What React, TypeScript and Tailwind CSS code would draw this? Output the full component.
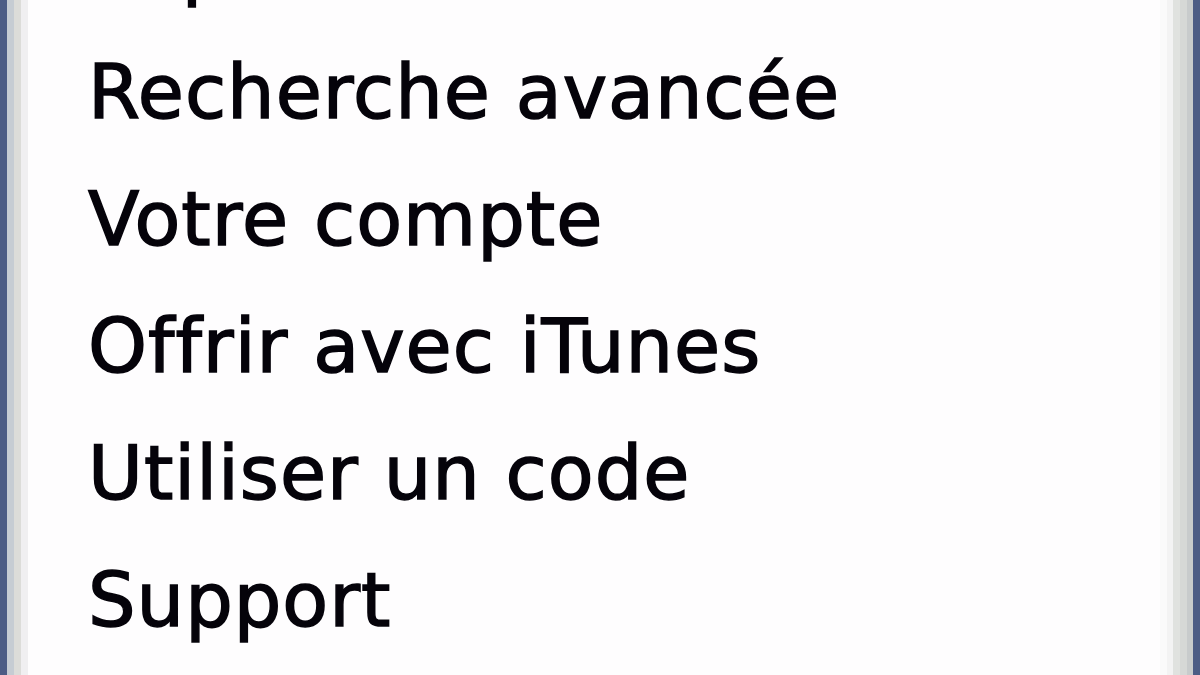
const links = [
  'Explorer',
  'Recherche avancée',
  'Votre compte',
  'Offrir avec iTunes',
  'Utiliser un code',
  'Support',
];

export default function App() {
  return (
    <div className="flex h-[675px] w-[1200px] overflow-hidden bg-white">
      {/* left window frame */}
      <div className="w-[7px] bg-[#4c5c85]" />
      <div className="w-[7px] bg-[#c6ccd3]" />
      <div className="w-[7px] bg-[#dcdcd9]" />
      <div className="w-[7px] bg-[#f0eff1]" />

      <div className="flex-1 overflow-hidden bg-[#fefdfe]">
        <ul
          className="-mt-[98px] pl-[60px] text-[75px] leading-[127px] tracking-[1px] text-[#05030a] [-webkit-text-stroke:1.5px_#05030a]"
          style={{ fontFamily: '"DejaVu Sans", Verdana, sans-serif' }}
        >
          {links.map((label) => (
            <li key={label} className="whitespace-nowrap">
              {label}
            </li>
          ))}
        </ul>
      </div>

      {/* right window frame */}
      <div className="w-[7px] bg-[#fafafa]" />
      <div className="w-[6px] bg-[#f3f3f3]" />
      <div className="w-[7px] bg-[#e0e2df]" />
      <div className="w-[7px] bg-[#d6d8d6]" />
      <div className="w-[6px] bg-[#c8cbcc]" />
      <div className="w-[7px] bg-[#4c5c85]" />
    </div>
  );
}
